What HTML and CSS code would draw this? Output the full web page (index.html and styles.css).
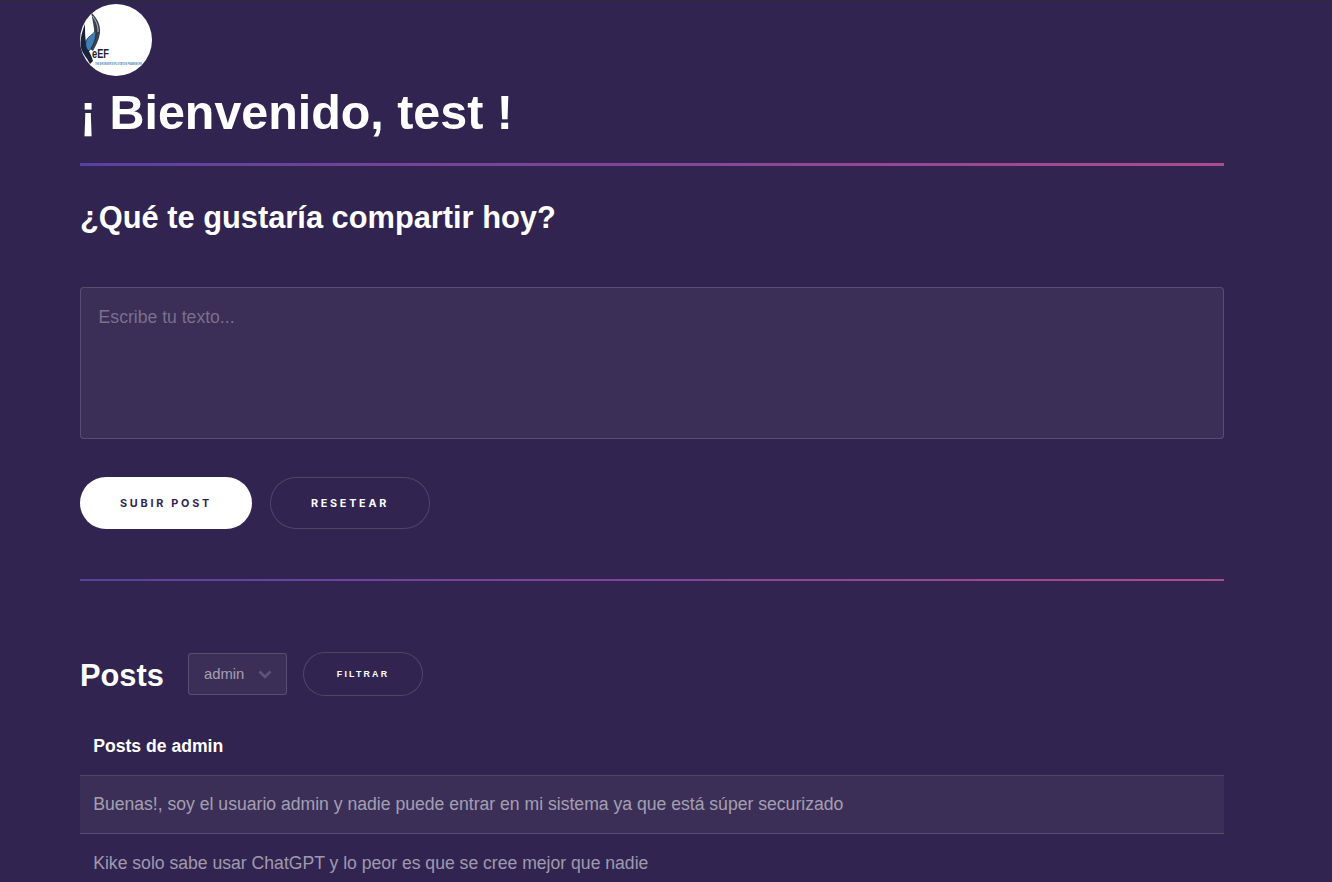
FILE: index.html
```html
<!DOCTYPE html>
<html lang="en">
<head>
    <meta charset="UTF-8">
    <meta name="viewport" content="width=device-width, initial-scale=1.0">
    <title>Bienvenido</title>
    <link rel="stylesheet" href="styles.css">
</head>
<body>
    <div class="container">
        <div class="logo">
            <svg width="72" height="72" viewBox="0 0 72 72">
                <clipPath id="logoClip"><circle cx="36" cy="36" r="36"/></clipPath>
                <g clip-path="url(#logoClip)">
                    <rect width="72" height="72" fill="#fff"/>
                    <g class="logo-art">
                        <path d="M11 8 C16 13 21 20 20 29 C19 36 16 41 13 47 L10 45 C13 38 15 32 14 25 C13 18 12 13 11 8Z" fill="#3a4150"/>
                        <path d="M12.5 12 C16 17 18.5 22 18 28" fill="none" stroke="#c4c8cf" stroke-width="0.9"/>
                        <path d="M5 20 C2 28 -1 37 1 45 C3 50 7 54 10 60 L13 57 C12 52 9 48 7 43 C5 36 5 28 5 20Z" fill="#16233a"/>
                        <path d="M16 26 C16 34 14 41 9 47 C6 45 5 41 6 37 C8 32 13 31 16 26Z" fill="#3f7fb5" stroke="#16233a" stroke-width="0.7"/>
                    </g>
                    <text x="12" y="54" class="logo-name" textLength="17" lengthAdjust="spacingAndGlyphs">eEF</text>
                    <text transform="translate(15 60.5) scale(1 1.6)" class="logo-sub" textLength="47" lengthAdjust="spacingAndGlyphs">THE BROWSER EXPLOITATION FRAMEWORK</text>
                </g>
            </svg>
        </div>
        <h1>¡ Bienvenido, test !</h1>
        <hr class="line">
        <h2>¿Qué te gustaría compartir hoy?</h2>
        <form class="post-form">
            <textarea placeholder="Escribe tu texto..."></textarea>
            <div class="actions">
                <input type="submit" class="button primary" value="Subir post">
                <input type="reset" class="button" value="Resetear">
            </div>
        </form>
        <hr class="line line-thin">
        <div class="posts-head">
            <h2 class="posts-title">Posts</h2>
            <div class="select-box">
                <span>admin</span>
                <svg width="14" height="9" viewBox="0 0 14 9"><path d="M1.5 1.5 L7 7 L12.5 1.5" fill="none" stroke="#5f5377" stroke-width="2.6"/></svg>
            </div>
            <a href="#" class="button small">Filtrar</a>
        </div>
        <table>
            <thead>
                <tr><th>Posts de admin</th></tr>
            </thead>
            <tbody>
                <tr class="odd"><td>Buenas!, soy el usuario admin y nadie puede entrar en mi sistema ya que está súper securizado</td></tr>
                <tr><td>Kike solo sabe usar ChatGPT y lo peor es que se cree mejor que nadie</td></tr>
            </tbody>
        </table>
    </div>
</body>
</html>
```

FILE: styles.css
```css
html, body {
    height: 100%;
    overflow: hidden;
}
body {
    font-family: "Liberation Sans", Arial, sans-serif;
    margin: 0;
    padding: 0;
    background-color: #312450;
    color: rgba(255, 255, 255, 0.55);
    border-top: 1px solid #2b2b36;
    box-sizing: border-box;
}
.container {
    width: 1144px;
    margin-left: 80px;
    padding-top: 3px;
}
.logo {
    height: 72px;
}
.logo svg {
    display: block;
}
.logo-art {
    filter: blur(0.4px);
}
.logo-name {
    font-family: "Liberation Sans", Arial, sans-serif;
    font-size: 13.5px;
    font-weight: 700;
    fill: #1a2230;
}
.logo-sub {
    font-family: "Liberation Sans", Arial, sans-serif;
    font-size: 2.2px;
    font-weight: 700;
    fill: #4f86b8;
}
h1 {
    margin: 9px 0 0;
    font-size: 48.4px;
    line-height: 54px;
    color: #fff;
}
h2 {
    margin: 0;
    color: #fff;
}
.line {
    height: 3px;
    border: 0;
    margin: 24px 0 0;
    background: linear-gradient(to right, #5a41a0, #ae4a90);
}
.line-thin {
    height: 2px;
    margin: 50px 0 0;
}
.line + h2 {
    font-size: 30.8px;
    line-height: 36px;
    margin-top: 34px;
}
.post-form {
    margin-top: 51px;
}
textarea {
    display: block;
    width: 100%;
    height: 152px;
    padding: 19px 17.6px 18px;
    box-sizing: border-box;
    background-color: rgba(255, 255, 255, 0.05);
    border: 1px solid rgba(255, 255, 255, 0.15);
    border-radius: 4px;
    font-family: "Liberation Sans", Arial, sans-serif;
    font-size: 17.6px;
    line-height: 20px;
    color: #fff;
    resize: none;
    outline: 0;
}
textarea::placeholder {
    color: rgba(255, 255, 255, 0.33);
}
.actions {
    display: flex;
    gap: 18px;
    margin-top: 38px;
}
.button {
    display: inline-block;
    height: 52px;
    padding: 1px 0 0;
    box-sizing: border-box;
    background: transparent;
    border: 0;
    box-shadow: inset 0 0 0 1px rgba(255, 255, 255, 0.15);
    border-radius: 26px;
    font-family: Inter, "Liberation Sans", sans-serif;
    font-size: 10.8px;
    font-weight: 700;
    letter-spacing: 2.75px;
    line-height: 50px;
    text-transform: uppercase;
    text-align: center;
    text-decoration: none;
    color: #fff;
}
.primary {
    width: 172px;
    background-color: #fff;
    box-shadow: none;
    color: #312450;
}
.actions .button:not(.primary) {
    width: 160px;
}
.posts-head {
    display: flex;
    align-items: center;
    margin-top: 71px;
}
.posts-title {
    font-size: 30.8px;
    line-height: 41px;
    padding-top: 3px;
    width: 108px;
}
.select-box {
    display: flex;
    align-items: center;
    justify-content: space-between;
    width: 99px;
    height: 42px;
    padding: 0 14px 0 15px;
    box-sizing: border-box;
    background-color: rgba(255, 255, 255, 0.05);
    border: 1px solid rgba(255, 255, 255, 0.15);
    border-radius: 3px;
    font-size: 14.8px;
    color: rgba(255, 255, 255, 0.55);
}
.small {
    width: 120px;
    height: 44px;
    margin-left: 16px;
    padding: 0;
    font-family: "Liberation Sans", Arial, sans-serif;
    font-size: 8.8px;
    line-height: 44px;
    letter-spacing: 2.2px;
}
table {
    width: 100%;
    margin-top: 35.3px;
    border-collapse: collapse;
}
th {
    padding: 0 13.2px 13.2px;
    font-size: 17.6px;
    line-height: 30.8px;
    text-align: left;
    color: #fff;
}
td {
    padding: 13.2px;
    font-size: 17.6px;
    line-height: 30.8px;
    border-top: 1px solid rgba(255, 255, 255, 0.15);
}
.odd {
    background-color: rgba(255, 255, 255, 0.05);
}
```
